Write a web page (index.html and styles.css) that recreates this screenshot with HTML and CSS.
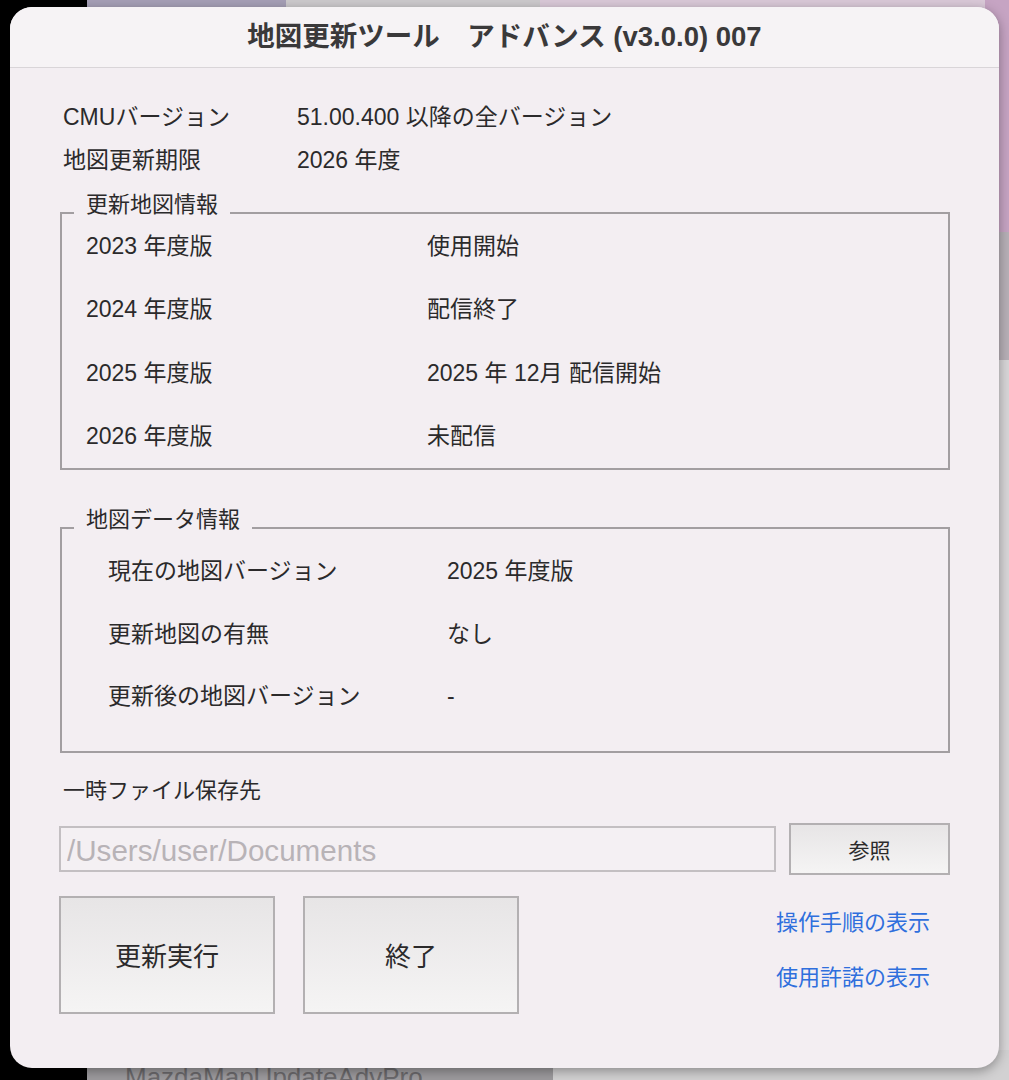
FILE: index.html
```html
<!DOCTYPE html>
<html lang="ja">
<head>
<meta charset="utf-8">
<title>地図更新ツール アドバンス</title>
<link rel="stylesheet" href="styles.css">
</head>
<body>
<div class="desktop">
  <div class="bg bg-top-a"></div>
  <div class="bg bg-top-b"></div>
  <div class="bg bg-top-c"></div>
  <div class="bg bg-right-a"></div>
  <div class="bg bg-right-b"></div>
  <div class="bg bg-right-c"></div>
  <div class="bg bg-bottom-a"><span class="bg-text">MazdaMapUpdateAdvPro...</span></div>
  <div class="bg bg-bottom-b"></div>

  <div class="window">
    <div class="titlebar">地図更新ツール　アドバンス (v3.0.0) 007</div>
    <div class="content">
      <div class="info">
        <div class="info-row"><span class="info-label">CMUバージョン</span><span>51.00.400 以降の全バージョン</span></div>
        <div class="info-row"><span class="info-label">地図更新期限</span><span>2026 年度</span></div>
      </div>

      <div class="group group-maps">
        <div class="legend">更新地図情報</div>
        <div class="g-rows">
          <div class="g-row"><span class="g-label">2023 年度版</span><span>使用開始</span></div>
          <div class="g-row"><span class="g-label">2024 年度版</span><span>配信終了</span></div>
          <div class="g-row"><span class="g-label">2025 年度版</span><span>2025 年 12月 配信開始</span></div>
          <div class="g-row"><span class="g-label">2026 年度版</span><span>未配信</span></div>
        </div>
      </div>

      <div class="group group-data">
        <div class="legend">地図データ情報</div>
        <div class="d-rows">
          <div class="d-row"><span class="d-label">現在の地図バージョン</span><span>2025 年度版</span></div>
          <div class="d-row"><span class="d-label">更新地図の有無</span><span>なし</span></div>
          <div class="d-row"><span class="d-label">更新後の地図バージョン</span><span>-</span></div>
        </div>
      </div>

      <div class="temp-label">一時ファイル保存先</div>
      <div class="path-row">
        <input class="path-input" type="text" value="/Users/user/Documents" readonly>
        <button class="btn btn-browse" type="button">参照</button>
      </div>

      <div class="action-row">
        <button class="btn btn-big" type="button">更新実行</button>
        <button class="btn btn-big" type="button">終了</button>
        <div class="links">
          <a class="link" href="#">操作手順の表示</a>
          <a class="link" href="#">使用許諾の表示</a>
        </div>
      </div>
    </div>
  </div>
</div>
</body>
</html>
```

FILE: styles.css
```css
html, body {
  margin: 0;
  padding: 0;
  background: #000;
}

body {
  width: 1009px;
  height: 1080px;
  overflow: hidden;
  font-family: "Liberation Sans", "Noto Sans CJK JP", sans-serif;
  color: #2b2a2b;
}

.desktop {
  position: relative;
  width: 1009px;
  height: 1080px;
  background: #000;
  overflow: hidden;
}

/* background desktop windows peeking out */
.bg { position: absolute; }
.bg-top-a { left: 87px; top: 0; width: 199px; height: 24px; background: #a69fb6; }
.bg-top-b { left: 286px; top: 0; width: 254px; height: 24px; background: #cdcacd; }
.bg-top-c { left: 540px; top: 0; width: 469px; height: 24px; background: #dac9d8; }
.bg-right-a { left: 985px; top: 0; width: 24px; height: 232px; background: #c6a4c3; }
.bg-right-b { left: 985px; top: 232px; width: 24px; height: 128px; background: #b7b0b7; }
.bg-right-c { left: 985px; top: 360px; width: 24px; height: 720px; background: #d8d6d8; }
.bg-bottom-a { left: 87px; top: 1050px; width: 466px; height: 30px; background: #9d9b9e; overflow: hidden; }
.bg-bottom-b { left: 553px; top: 1050px; width: 456px; height: 30px; background: #d2d1d2; }
.bg-text {
  display: block;
  padding: 14px 0 0 38px;
  font-size: 26px;
  line-height: 26px;
  color: #6c6a6d;
  white-space: nowrap;
}

.window {
  position: absolute;
  left: 10px;
  top: 7px;
  width: 989px;
  height: 1061px;
  background: #f3eef2;
  border-radius: 22px;
  box-shadow: 0 3px 12px rgba(0, 0, 0, 0.35);
  overflow: hidden;
  display: flex;
  flex-direction: column;
}

.titlebar {
  height: 60px;
  line-height: 60px;
  border-bottom: 1px solid #d9d5d8;
  background: #f6f3f5;
  text-align: center;
  font-size: 27.5px;
  font-weight: bold;
  color: #3a393a;
  white-space: nowrap;
}

.content {
  padding: 0 49px 0 50px;
  font-size: 23px;
  line-height: 24px;
}

.info {
  padding: 27px 0 0 3px;
}

.info-row {
  height: 43px;
  display: flex;
  align-items: center;
  white-space: nowrap;
}

.info-label {
  width: 234px;
  flex: none;
}

.group {
  border: 2px solid #a29ea1;
  margin-top: 31px;
}

.legend {
  box-sizing: border-box;
  width: fit-content;
  height: 24px;
  line-height: 24px;
  margin: -24px 0 0 12px;
  padding: 3px 12px 0;
  background: #f3eef2;
  font-size: 22px;
}

.g-rows {
  padding-left: 24px;
}

.g-row {
  height: 63.5px;
  display: flex;
  align-items: center;
  white-space: nowrap;
}

.g-label {
  width: 341px;
  flex: none;
}

.group-data {
  margin-top: 57px;
}

.d-rows {
  padding: 11px 0 23px 46px;
}

.d-row {
  height: 62.5px;
  display: flex;
  align-items: center;
  white-space: nowrap;
}

.d-label {
  width: 339px;
  flex: none;
}

.temp-label {
  margin-top: 26px;
  padding-left: 3px;
  font-size: 22px;
}

.path-row {
  margin-top: 20px;
  height: 52px;
  display: flex;
  align-items: center;
  gap: 13px;
}

.path-input {
  box-sizing: border-box;
  width: 717px;
  height: 46px;
  margin: 0 0 0 -1px;
  padding: 4px 0 0 6px;
  border: 2px solid #c3bfc2;
  border-radius: 0;
  background: #f4f0f3;
  font-family: "Liberation Sans", "Noto Sans CJK JP", sans-serif;
  font-size: 29.6px;
  color: #b8b3b7;
  outline: none;
}

.btn {
  box-sizing: border-box;
  border: 2px solid #b3b0b2;
  border-radius: 0;
  background: linear-gradient(#e7e5e6, #f5f4f4);
  color: #2b2a2b;
  font-family: "Liberation Sans", "Noto Sans CJK JP", sans-serif;
  padding: 0;
  margin: 0;
}

.btn-browse {
  width: 161px;
  height: 52px;
  font-size: 21px;
}

.action-row {
  margin-top: 21px;
  display: flex;
  align-items: flex-start;
  gap: 28px;
}

.btn-big {
  width: 216px;
  height: 118px;
  font-size: 26px;
}

.btn-big:first-child {
  margin-left: -1px;
}

.links {
  margin-left: auto;
  width: 174px;
  padding-top: 16px;
  display: flex;
  flex-direction: column;
  gap: 33px;
}

.link {
  font-size: 22px;
  line-height: 22px;
  color: #2f6fdd;
  text-decoration: none;
  white-space: nowrap;
}
```
